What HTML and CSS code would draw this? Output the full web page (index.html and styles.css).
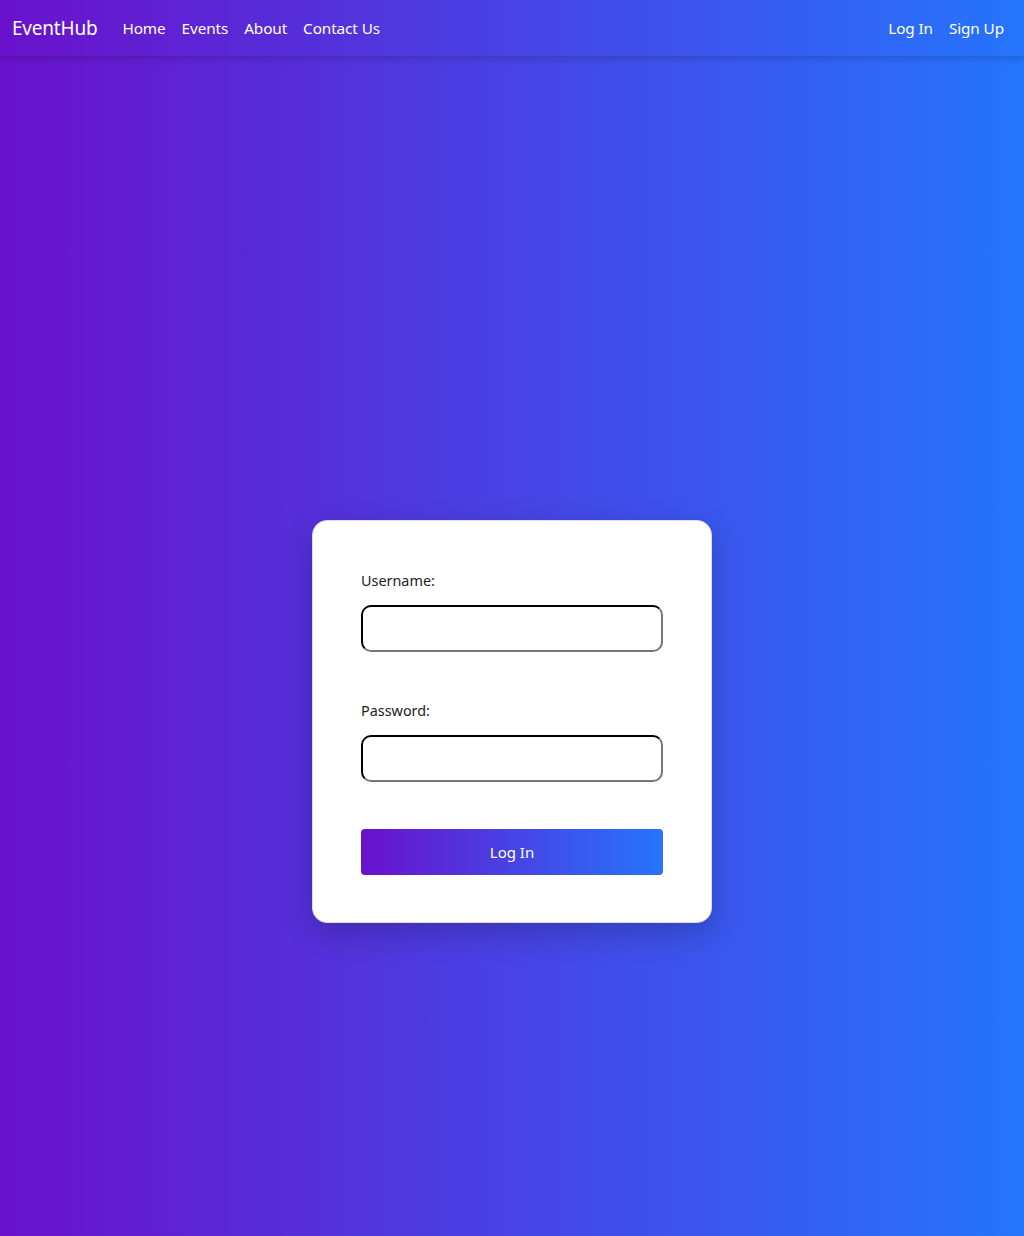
FILE: index.html
```html
<!DOCTYPE html>
<html lang="en">
<head>
<meta charset="utf-8">
<title>EventHub - Log In</title>
<link rel="stylesheet" href="styles.css">
</head>
<body>
<nav class="navbar">
  <div class="nav-left">
    <a class="brand" href="#">EventHub</a>
    <a class="nav-link" href="#">Home</a>
    <a class="nav-link" href="#">Events</a>
    <a class="nav-link" href="#">About</a>
    <a class="nav-link" href="#">Contact Us</a>
  </div>
  <div class="nav-right">
    <a class="nav-link" href="#">Log In</a>
    <a class="nav-link" href="#">Sign Up</a>
  </div>
</nav>
<main class="main">
  <form class="card">
    <label class="label" for="username">Username:</label>
    <input class="input" id="username" type="text">
    <label class="label label-gap" for="password">Password:</label>
    <input class="input" id="password" type="password">
    <button class="btn" type="button">Log In</button>
  </form>
</main>
</body>
</html>
```
FILE: styles.css
```css
* { box-sizing: border-box; }
html, body { margin: 0; padding: 0; }
body {
  font-family: "Noto Sans", "Open Sans", sans-serif;
  min-height: 1236px;
  background: linear-gradient(to right, #6a11cb, #2575fc);
  color: #222;
}
.navbar {
  height: 56px;
  display: flex;
  align-items: center;
  justify-content: space-between;
  padding: 0 12px;
  box-shadow: 0 3px 6px rgba(0, 0, 0, 0.15);
  position: relative;
}
.nav-left, .nav-right {
  display: flex;
  align-items: center;
}
.brand {
  color: #fff;
  text-decoration: none;
  font-size: 19px;
  margin-right: 17px;
  letter-spacing: -0.2px;
}
.nav-link {
  color: #fff;
  text-decoration: none;
  font-size: 15.3px;
  padding: 0 8px;
  letter-spacing: -0.1px;
}
.main {
  display: flex;
  justify-content: center;
  padding-top: 464px;
}
.card {
  width: 400px;
  background: #fff;
  border: 1px solid #ddd;
  border-radius: 15px;
  padding: 48px 48px 47px;
  display: flex;
  flex-direction: column;
  box-shadow: 0 10px 30px rgba(0, 0, 0, 0.2);
}
.label {
  font-size: 14.4px;
  line-height: 24px;
  color: #222;
  margin-bottom: 12px;
}
.label-gap { margin-top: 47px; }
.input {
  width: 302px;
  height: 47px;
  border: 2px inset #767676;
  border-color: #1a1a1a #767676 #767676 #1a1a1a;
  border-radius: 10px;
  font-size: 15px;
  padding: 0 10px;
}
.btn {
  margin-top: 47px;
  width: 302px;
  height: 46px;
  border: none;
  border-radius: 4px;
  background: linear-gradient(to right, #6a11cb, #2575fc);
  color: #fff;
  font-family: inherit;
  font-size: 15px;
}
```
